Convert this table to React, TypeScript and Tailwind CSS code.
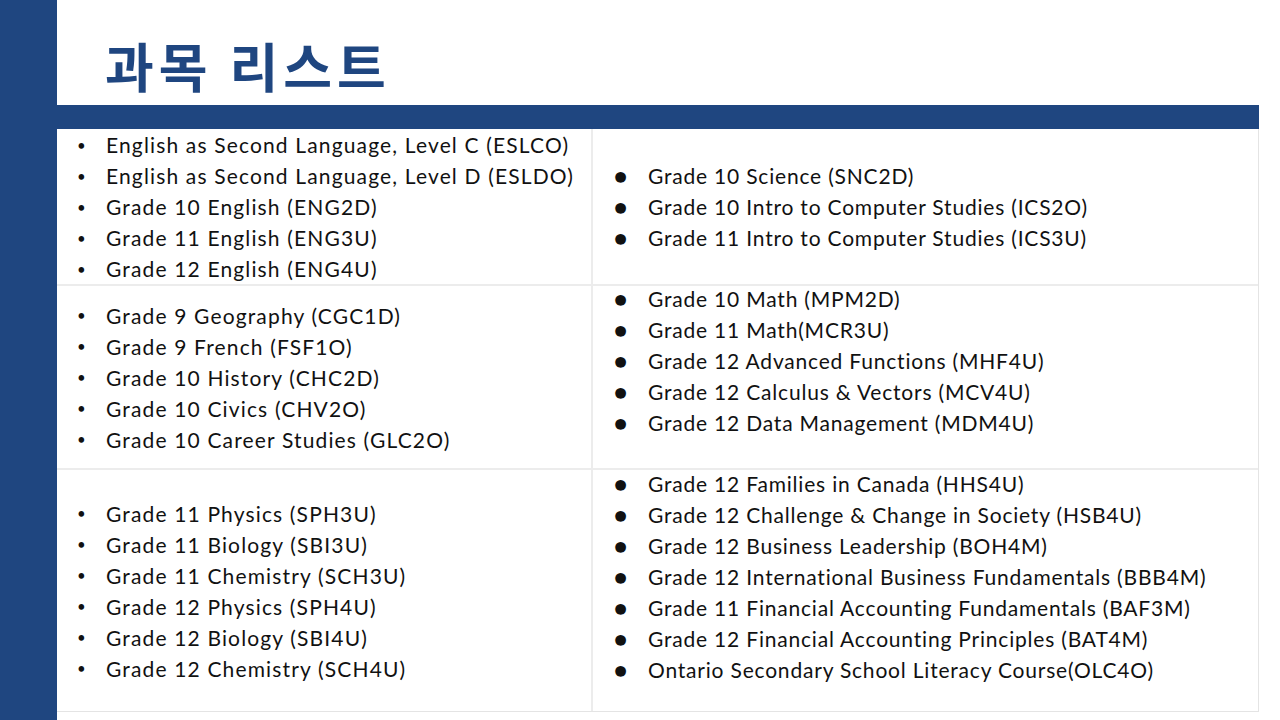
const rows: { left: string[]; right: string[]; leftPad: string; rightPad: string }[] = [
  {
    left: [
      "English as Second Language, Level C (ESLCO)",
      "English as Second Language, Level D (ESLDO)",
      "Grade 10 English (ENG2D)",
      "Grade 11 English (ENG3U)",
      "Grade 12 English (ENG4U)",
    ],
    right: [
      "Grade 10 Science (SNC2D)",
      "Grade 10 Intro to Computer Studies (ICS2O)",
      "Grade 11 Intro to Computer Studies (ICS3U)",
    ],
    leftPad: "items-center",
    rightPad: "items-center",
  },
  {
    left: [
      "Grade 9 Geography (CGC1D)",
      "Grade 9 French (FSF1O)",
      "Grade 10 History (CHC2D)",
      "Grade 10 Civics (CHV2O)",
      "Grade 10 Career Studies (GLC2O)",
    ],
    right: [
      "Grade 10 Math (MPM2D)",
      "Grade 11 Math(MCR3U)",
      "Grade 12 Advanced Functions (MHF4U)",
      "Grade 12 Calculus & Vectors (MCV4U)",
      "Grade 12 Data Management (MDM4U)",
    ],
    leftPad: "items-center",
    rightPad: "items-start -mt-[3px]",
  },
  {
    left: [
      "Grade 11 Physics (SPH3U)",
      "Grade 11 Biology (SBI3U)",
      "Grade 11 Chemistry (SCH3U)",
      "Grade 12 Physics (SPH4U)",
      "Grade 12 Biology (SBI4U)",
      "Grade 12 Chemistry (SCH4U)",
    ],
    right: [
      "Grade 12 Families in Canada (HHS4U)",
      "Grade 12 Challenge & Change in Society (HSB4U)",
      "Grade 12 Business Leadership (BOH4M)",
      "Grade 12 International Business Fundamentals (BBB4M)",
      "Grade 11 Financial Accounting Fundamentals (BAF3M)",
      "Grade 12 Financial Accounting Principles (BAT4M)",
      "Ontario Secondary School Literacy Course(OLC4O)",
    ],
    leftPad: "items-center",
    rightPad: "items-start -mt-[2px]",
  },
];

const heights = ["h-[155px]", "h-[184px]", "h-[243px]"];

function List({ items, big }: { items: string[]; big?: boolean }) {
  return (
    <ul className="flex flex-col">
      {items.map((t) => (
        <li key={t} className="flex h-[31px] items-center pt-[1px]">
          <span
            className={
              big
                ? "w-[55px] pl-[21px] text-[22px] leading-none"
                : "w-[49px] pl-[20px] text-[15px] leading-none"
            }
          >
            {big ? "●" : "•"}
          </span>
          <span
            className={
              big
                ? "whitespace-nowrap text-[21px] tracking-[0.8px]"
                : "whitespace-nowrap text-[21px] tracking-[1.15px]"
            }
          >
            {t}
          </span>
        </li>
      ))}
    </ul>
  );
}

export default function App() {
  return (
    <div className="flex h-[720px] w-[1280px] bg-white font-['Lato','Liberation_Sans',sans-serif] text-[20px] text-[#111]">
      <div className="w-[57px] shrink-0 bg-[#1f4680]" />
      <div className="flex w-[1202px] flex-col">
        <div className="flex h-[105px] items-center pl-[48px] pt-[26px]">
          <h1 className="font-['Noto_Sans_CJK_KR',sans-serif] text-[53px] font-bold tracking-[5px] text-[#1f4680]">
            과목 리스트
          </h1>
        </div>
        <div className="h-[24px] bg-[#1f4680]" />
        <div className="flex flex-col border-b border-r border-[#e4e4e4]">
          {rows.map((r, i) => (
            <div
              key={i}
              className={`flex ${heights[i]} ${i > 0 ? "border-t-2 border-[#ececec]" : ""}`}
            >
              <div className={`flex w-[536px] shrink-0 border-r-2 border-[#ececec] ${r.leftPad}`}>
                <List items={r.left} />
              </div>
              <div className={`flex flex-1 ${r.rightPad}`}>
                <List items={r.right} big />
              </div>
            </div>
          ))}
        </div>
      </div>
    </div>
  );
}
